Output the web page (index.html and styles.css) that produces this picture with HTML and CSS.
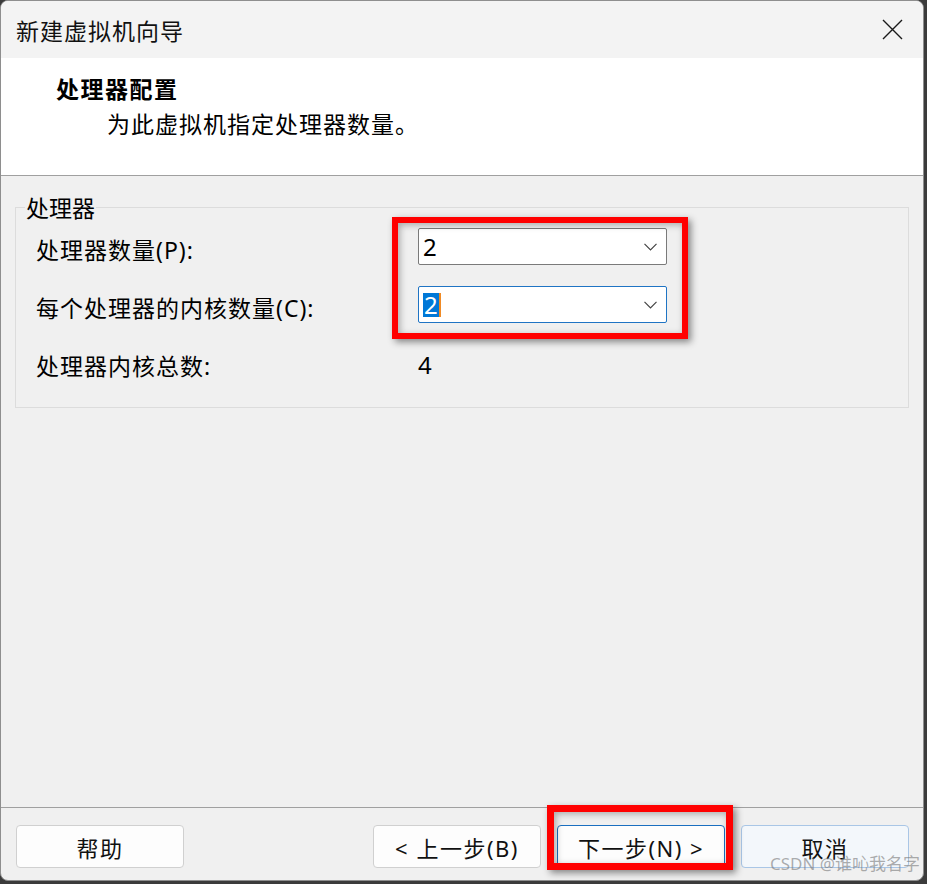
FILE: index.html
```html
<!DOCTYPE html>
<html lang="zh-CN">
<head>
<meta charset="utf-8">
<title>新建虚拟机向导</title>
<link rel="stylesheet" href="styles.css">
</head>
<body>
<div class="window">
  <div class="titlebar">
    <span class="title">新建虚拟机向导</span>
    <svg class="close" width="21" height="21" viewBox="0 0 21 21"><path d="M1 1 L20 20 M20 1 L1 20" stroke="#1a1a1a" stroke-width="1.4" fill="none"/></svg>
  </div>
  <div class="header">
    <div class="heading">处理器配置</div>
    <div class="subtitle">为此虚拟机指定处理器数量。</div>
  </div>
  <div class="content">
    <fieldset class="group">
      <legend class="legend">处理器</legend>
      <div class="grid">
        <div class="label">处理器数量(P):</div>
        <div class="combo">
          <span class="value">2</span>
          <svg class="chev" width="13" height="8" viewBox="0 0 13 8"><path d="M0.5 0.8 L6.5 6.8 L12.5 0.8" stroke="#444" stroke-width="1.2" fill="none"/></svg>
        </div>
        <div class="label">每个处理器的内核数量(C):</div>
        <div class="combo focused">
          <span class="value"><span class="sel">2</span><span class="caret"></span></span>
          <svg class="chev" width="13" height="8" viewBox="0 0 13 8"><path d="M0.5 0.8 L6.5 6.8 L12.5 0.8" stroke="#444" stroke-width="1.2" fill="none"/></svg>
        </div>
        <div class="label">处理器内核总数:</div>
        <div class="total">4</div>
      </div>
    </fieldset>
  </div>
  <div class="footer">
    <button class="btn">帮助</button>
    <div class="right-btns">
      <button class="btn">&lt; 上一步(B)</button>
      <button class="btn primary">下一步(N) &gt;</button>
      <button class="btn cancel">取消</button>
    </div>
  </div>
</div>
<div class="mark mark-combo"></div>
<div class="mark mark-next"></div>
<div class="watermark">CSDN @谁吣我名字</div>
</body>
</html>
```
FILE: styles.css
```css
html, body {
  margin: 0;
  padding: 0;
}
body {
  width: 927px;
  height: 884px;
  background: #3b3b3b;
  position: relative;
  overflow: hidden;
  font-family: "Noto Sans", "Noto Sans CJK SC", sans-serif;
  color: #000;
}
.window {
  width: 924px;
  height: 881px;
  box-sizing: border-box;
  border: 1px solid #8e8e8e;
  border-radius: 8px;
  overflow: hidden;
  display: flex;
  flex-direction: column;
  background: #f0f0f0;
}
.titlebar {
  height: 57px;
  flex: none;
  background: #f3f3f3;
  display: flex;
  align-items: center;
  justify-content: space-between;
  padding: 0 20px 0 15px;
}
.title {
  font-family: "Noto Sans CJK SC", sans-serif;
  font-size: 23px;
  letter-spacing: 1px;
  line-height: 30px;
  color: #111;
}
.header {
  height: 118px;
  flex: none;
  box-sizing: border-box;
  background: #fff;
  padding: 14px 0 0 55px;
  border-bottom: 1px solid #a0a0a0;
}
.heading {
  font-family: "Noto Sans CJK SC", sans-serif;
  font-size: 23px;
  font-weight: 700;
  line-height: 32px;
  letter-spacing: 1.5px;
}
.subtitle {
  font-family: "Noto Sans CJK SC", sans-serif;
  font-size: 23px;
  line-height: 32px;
  margin-top: 3px;
  padding-left: 51px;
  letter-spacing: 1px;
}
.content {
  flex: 1;
  padding: 19px 14px 0 14px;
}
.group {
  margin: 0;
  padding: 9px 0 26px 20px;
  border: 1px solid #dcdcdc;
  min-width: 0;
}
.legend {
  font-family: "Noto Sans CJK SC", sans-serif;
  font-size: 23px;
  line-height: 24px;
  padding: 0 1px;
  margin-left: -11px;
}
.grid {
  display: grid;
  grid-template-columns: 382px 249px;
  grid-auto-rows: 37px;
  row-gap: 21px;
}
.label {
  font-size: 23px;
  line-height: 32px;
  margin-top: 6px;
  letter-spacing: 1px;
  white-space: nowrap;
}
.combo {
  box-sizing: border-box;
  height: 37px;
  background: #fff;
  border: 1px solid #7a7a7a;
  border-radius: 2px;
  display: flex;
  align-items: center;
  justify-content: space-between;
  padding: 0 9px 0 4px;
}
.combo.focused {
  border-color: #1f74c4;
}
.value {
  font-size: 24px;
  line-height: 24px;
  display: flex;
  align-items: center;
}
.sel {
  background: #0078d7;
  color: #fff;
  padding: 0 1px;
}
.caret {
  width: 2px;
  height: 24px;
  background: #f08a24;
}
.chev {
  display: block;
}
.total {
  font-size: 24px;
  line-height: 32px;
  margin-top: 5px;
}
.footer {
  flex: none;
  height: 73px;
  box-sizing: border-box;
  border-top: 1px solid #a0a0a0;
  display: flex;
  justify-content: space-between;
  align-items: flex-start;
  padding: 17px 14px 0 15px;
}
.right-btns {
  display: flex;
  gap: 16px;
}
.btn {
  width: 168px;
  height: 43px;
  box-sizing: border-box;
  border: 1px solid #d0d0d0;
  border-radius: 4px;
  background: #fdfdfd;
  font-family: "Noto Sans", "Noto Sans CJK SC", sans-serif;
  font-size: 22px;
  letter-spacing: 1.5px;
  color: #111;
  padding: 0;
}
.btn.primary {
  border-color: #1a6fc0;
}
.btn.cancel {
  border-color: #a9c6e6;
  background: #f3f7fb;
}
.mark {
  position: absolute;
  box-sizing: border-box;
  border: 6px solid #ff0000;
  box-shadow: 3px 3px 7px rgba(0, 0, 0, 0.45), inset 2px 2px 7px rgba(0, 0, 0, 0.3);
}
.mark-combo {
  left: 392px;
  top: 217px;
  width: 296px;
  height: 122px;
}
.mark-next {
  left: 547px;
  top: 805px;
  width: 186px;
  height: 65px;
  border-width: 7px;
}
.watermark {
  position: absolute;
  left: 770px;
  top: 850px;
  font-family: "Noto Sans", "Noto Sans CJK SC", sans-serif;
  font-size: 17px;
  color: rgba(120, 120, 120, 0.6);
  white-space: nowrap;
}
```
